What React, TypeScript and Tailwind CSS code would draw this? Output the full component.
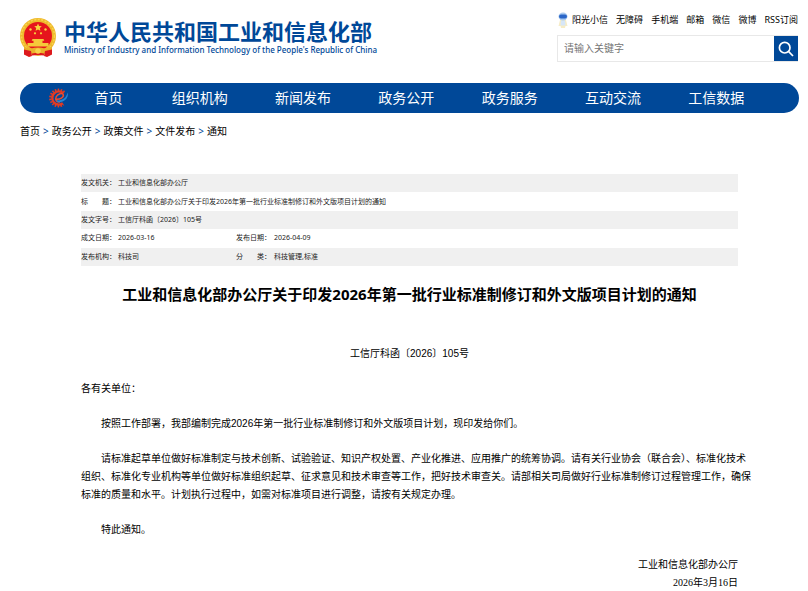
import React from "react";

const topLinks = ["无障碍", "手机端", "邮箱", "微信", "微博", "RSS订阅"];
const navItems = ["组织机构", "新闻发布", "政务公开", "政务服务", "互动交流", "工信数据"];
const crumbs = ["首页", "政务公开", "政策文件", "文件发布", "通知"];

function Emblem() {
  return (
    <svg viewBox="0 0 36 39" className="h-[39px] w-9 shrink-0" role="img" aria-label="国徽">
      <circle cx="18" cy="18" r="18" fill="#efb92c" />
      <circle cx="18" cy="18" r="16.5" fill="none" stroke="#f8d44c" strokeWidth="1.5" strokeDasharray="2 1.5" />
      <circle cx="18" cy="18" r="14" fill="#e6151c" />
      <path d="M18 5.5l1.1 2.5 2.7.3-2 1.8.6 2.7-2.4-1.4-2.4 1.4.6-2.7-2-1.8 2.7-.3z" fill="#f8d43e" />
      <g fill="#f8d43e">
        <circle cx="10.5" cy="11.5" r="1.2" />
        <circle cx="25.5" cy="11.5" r="1.2" />
        <circle cx="15" cy="15.3" r="1.1" />
        <circle cx="21" cy="15.3" r="1.1" />
      </g>
      <path d="M12.500 21h11l.8 1.700h-1.800v2.300h6v3.500H7.500V25h6v-2.300h-1.800z" fill="#f5ca3a" />
      <path d="M4 28q3 3 7 2.500 7-2 14 0 4 .5 7-2.500l0 8-5 2.500-3-2-6 1.500-6-1.500-3 2-5-2.500z" fill="#eab32c" />
      <path d="M4 31.500l7 1.500 1 5-3 1-5-2.500zM32 31.500l-7 1.500-1 5 3 1 5-2.500z" fill="#dd191d" />
      <path d="M12 35.500l6-1 6 1v2l-6-.5-6 .5z" fill="#dd191d" />
      <circle cx="18" cy="33" r="2.800" fill="#f7d34b" />
    </svg>
  );
}

function Mascot() {
  return (
    <svg viewBox="0 0 12 16" className="h-4 w-3" aria-hidden="true">
      <path d="M3 8h6l1.500 6H8.500l-.5 2H4l-.5-2H1.500z" fill="#f6ecc6" />
      <path d="M4 8.500h4l.5 5h-5z" fill="#d6e6f8" />
      <ellipse cx="6" cy="4.500" rx="4.500" ry="4" fill="#a9c9ee" />
      <rect x="2" y="2.500" width="8" height="4" rx="2" fill="#2a66c8" />
    </svg>
  );
}

function GearLogo() {
  return (
    <svg viewBox="0 0 20 20" className="h-5 w-5 shrink-0" aria-hidden="true">
      <path d="M15.300 4.200A8.200 8.200 0 1 0 14.500 16.500" fill="none" stroke="#e33a22" strokeWidth="2.400" strokeDasharray="1.500 1.300" />
      <path d="M14.600 5.400A6.600 6.600 0 1 0 13.800 15.300" fill="none" stroke="#e33a22" strokeWidth="2.400" />
      <path d="M7 11.200C11 11.500 15 9.500 14.300 6.800 13.600 4.700 8.800 5.300 7.200 8.700 5.600 12.200 7.800 14.600 11 13.800" fill="none" stroke="#ef4b2d" strokeWidth="1.500" />
      <path d="M7.500 12.300C13 13 17.500 10 18.500 4.500 20.500 9.500 14.500 15.500 8.500 14z" fill="#2484d2" />
    </svg>
  );
}

function Label({ wide, children }: { wide?: boolean; children: string }) {
  return (
    <th scope="row" className="p-0 text-left font-normal whitespace-nowrap">
      {wide ? (
        <span className="flex w-[35px]">
          <span className="flex w-7 justify-between">
            <span>{children[0]}</span>
            <span>{children[1]}</span>
          </span>
          ：
        </span>
      ) : (
        children + "："
      )}
    </th>
  );
}

export default function App() {
  return (
    <div className="min-h-screen bg-white pb-1 font-['Noto_Sans','Noto_Sans_CJK_SC',sans-serif] text-black">
      <header className="flex justify-between pt-3 pr-[10px] pl-5">
        <a href="#" className="flex h-[51px] items-start gap-2 pt-[6px] text-[#004898]">
          <Emblem />
          <span className="flex flex-col pt-[2px]">
            <span className="font-['Liberation_Sans','Noto_Sans_CJK_SC',sans-serif] text-[22px] leading-[26px] font-bold whitespace-nowrap">
              中华人民共和国工业和信息化部
            </span>
            <span className="font-['Noto_Sans',sans-serif] text-[8px] leading-2 font-medium whitespace-nowrap">
              Ministry of Industry and Information Technology of the People's Republic of China
            </span>
          </span>
        </a>
        <div className="flex w-[241px] flex-col">
          <div className="flex h-4 items-center justify-between text-[9px] whitespace-nowrap">
            <a href="#" className="flex items-center gap-[3px]">
              <Mascot />
              阳光小信
            </a>
            {topLinks.map((t) => (
              <a key={t} href="#">{t}</a>
            ))}
          </div>
          <form className="mt-[7px] flex h-[27px] border border-r-0 border-[#e8e8e8]">
            <input
              type="text"
              aria-label="请输入关键字"
              placeholder="请输入关键字"
              className="min-w-0 flex-1 px-[6px] text-[10px] outline-none placeholder:text-[#757575]"
            />
            <button type="button" aria-label="搜索" className="flex w-6 items-center justify-center bg-[#004898]">
              <svg viewBox="0 0 16 16" className="h-4 w-4" fill="none" stroke="white" strokeWidth="1.700">
                <circle cx="6.700" cy="6.700" r="5.300" />
                <path d="M10.700 10.700l4.300 4.300" />
              </svg>
            </button>
          </form>
        </div>
      </header>

      <nav className="mt-5 mr-[9px] ml-5 flex h-[30px] items-center rounded-full bg-[#004898] pr-[31px] pl-[29px] text-[14px] leading-7 text-white">
        <GearLogo />
        <ul className="flex flex-1 items-center">
          <li className="w-[79px] text-center">
            <a href="#">首页</a>
          </li>
          {navItems.map((t) => (
            <li key={t} className="flex-1 text-center">
              <a href="#">{t}</a>
            </li>
          ))}
        </ul>
      </nav>

      <nav aria-label="面包屑" className="mt-[10px] ml-5 flex gap-[3px] text-[10px] leading-4">
        {crumbs.map((t, i) => (
          <React.Fragment key={t}>
            {i > 0 && <span className="text-[#004898]">&gt;</span>}
            <a href="#">{t}</a>
          </React.Fragment>
        ))}
      </nav>

      <main className="mr-[70px] ml-[81px] pt-[35px]">
        <table className="h-[92px] w-full table-fixed border-collapse text-[7px] leading-[18px] text-[#222] [&_td]:p-0 [&_tr:nth-child(odd)]:bg-[#f0f0f0]">
          <colgroup>
            <col className="w-[37px]" />
            <col className="w-[118px]" />
            <col className="w-[38px]" />
            <col />
          </colgroup>
          <tbody>
            <tr>
              <Label>发文机关</Label>
              <td colSpan={3}>工业和信息化部办公厅</td>
            </tr>
            <tr>
              <Label wide>标题</Label>
              <td colSpan={3}>工业和信息化部办公厅关于印发2026年第一批行业标准制修订和外文版项目计划的通知</td>
            </tr>
            <tr>
              <Label>发文字号</Label>
              <td colSpan={3}>工信厅科函〔2026〕105号</td>
            </tr>
            <tr>
              <Label>成文日期</Label>
              <td>2026-03-16</td>
              <Label>发布日期</Label>
              <td>2026-04-09</td>
            </tr>
            <tr>
              <Label>发布机构</Label>
              <td>科技司</td>
              <Label wide>分类</Label>
              <td>科技管理,标准</td>
            </tr>
          </tbody>
        </table>

        <article className="font-['Liberation_Sans','Noto_Sans_CJK_SC',sans-serif] text-[10px] leading-[18px]">
          <h1 className="mt-[18px] text-center font-['Noto_Sans','Noto_Sans_CJK_SC',sans-serif] text-[15px] leading-5 font-bold">
            工业和信息化部办公厅关于印发2026年第一批行业标准制修订和外文版项目计划的通知
          </h1>
          <p className="mt-[41px] text-center">工信厅科函〔2026〕105号</p>
          <div className="-mr-4 mt-[17px] flex flex-col gap-[17px]">
            <p>各有关单位：</p>
            <p className="indent-5">按照工作部署，我部编制完成2026年第一批行业标准制修订和外文版项目计划，现印发给你们。</p>
            <p className="indent-5">
              请标准起草单位做好标准制定与技术创新、试验验证、知识产权处置、产业化推进、应用推广的统筹协调。请有关行业协会（联合会）、标准化技术组织、标准化专业机构等单位做好标准组织起草、征求意见和技术审查等工作，把好技术审查关。请部相关司局做好行业标准制修订过程管理工作，确保标准的质量和水平。计划执行过程中，如需对标准项目进行调整，请按有关规定办理。
            </p>
            <p className="indent-5">特此通知。</p>
          </div>
          <div className="mt-[17px] text-right">
            <p>工业和信息化部办公厅</p>
            <p className="font-['Liberation_Serif','Noto_Sans_CJK_SC',serif]">2026年3月16日</p>
          </div>
        </article>
      </main>
    </div>
  );
}
